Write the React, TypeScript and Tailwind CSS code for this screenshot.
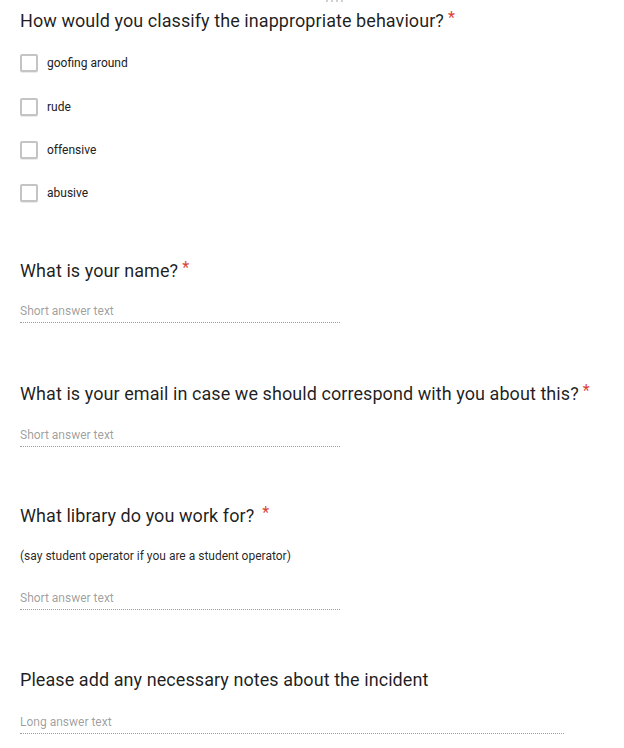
import React from "react";

const Star = ({ spaced }: { spaced?: boolean }) => (
  <span
    className={`relative -top-[4px] text-[16px] text-[#db4437] ${spaced ? "ml-[8px]" : "ml-[4px]"}`}
  >
    *
  </span>
);

const Title = ({ children, required, spaced }: { children: React.ReactNode; required?: boolean; spaced?: boolean }) => (
  <div className="text-[18px] leading-[24px] tracking-[0.07px] text-[#000000e0] whitespace-nowrap">
    {children}
    {required && <Star spaced={spaced} />}
  </div>
);

const Answer = ({ text, width }: { text: string; width: string }) => (
  <div className={`${width} text-[12px] leading-[16px] pb-[3px] border-b border-dotted border-[#9e9e9e] text-[#00000066]`}>
    {text}
  </div>
);

const Check = ({ label }: { label: string }) => (
  <div className="h-[43.33px] flex items-center">
    <div className="w-[18px] h-[18px] rounded-[2px] border-2 border-[#c4c4c4] bg-white shadow-[0_1px_0_rgba(0,0,0,0.08)]" />
    <span className="ml-[9px] text-[12px] leading-[16px] text-[#212121]">{label}</span>
  </div>
);

export default function App() {
  return (
    <div className="relative min-h-[748px] w-[624px] bg-white px-5 pt-[9.4px] font-['Roboto','Liberation_Sans',sans-serif]">
      <div className="absolute top-0 left-[326px] flex gap-[3px]">
        <span className="w-[2px] h-[2px] bg-[#d0d0d0]" />
        <span className="w-[2px] h-[2px] bg-[#d0d0d0]" />
        <span className="w-[2px] h-[2px] bg-[#d0d0d0]" />
        <span className="w-[2px] h-[2px] bg-[#d0d0d0]" />
      </div>

      <Title required>How would you classify the inappropriate behaviour?</Title>
      <div className="mt-[7.4px]">
        <Check label="goofing around" />
        <Check label="rude" />
        <Check label="offensive" />
        <Check label="abusive" />
      </div>

      <div className="mt-[44px]">
        <Title required>What is your name?</Title>
        <div className="mt-[19px]">
          <Answer text="Short answer text" width="w-[320px]" />
        </div>
      </div>

      <div className="mt-[59px]">
        <Title required>What is your email in case we should correspond with you about this?</Title>
        <div className="mt-[20.3px]">
          <Answer text="Short answer text" width="w-[320px]" />
        </div>
      </div>

      <div className="mt-[56.7px]">
        <Title required spaced>What library do you work for?</Title>
        <div className="mt-[19px] text-[12px] leading-[16px] text-[#000000de]">
          (say student operator if you are a student operator)
        </div>
        <div className="mt-[25.7px]">
          <Answer text="Short answer text" width="w-[320px]" />
        </div>
      </div>

      <div className="mt-[58.3px]">
        <Title>Please add any necessary notes about the incident</Title>
        <div className="mt-[22.3px]">
          <Answer text="Long answer text" width="w-[544px]" />
        </div>
      </div>
    </div>
  );
}
